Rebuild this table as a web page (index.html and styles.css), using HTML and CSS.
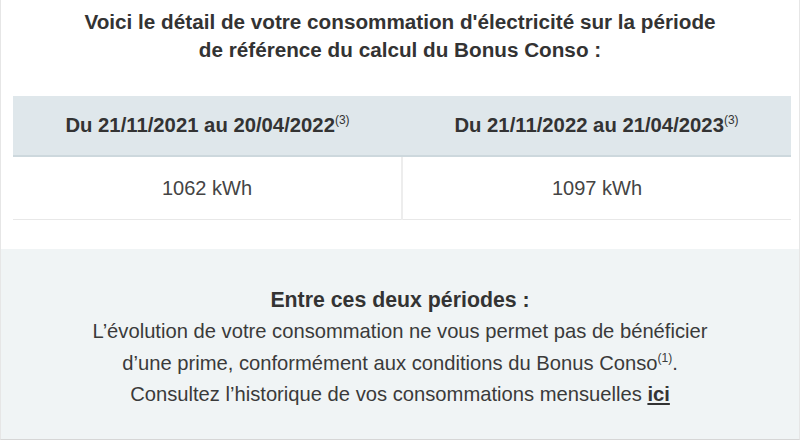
FILE: index.html
```html
<!DOCTYPE html>
<html lang="fr">
<head>
<meta charset="utf-8">
<link rel="stylesheet" href="styles.css">
</head>
<body>
<div class="card">
  <h1 class="title">Voici le détail de votre consommation d'électricité sur la période<br>de référence du calcul du Bonus Conso :</h1>
  <table class="conso">
    <thead>
      <tr>
        <th>Du 21/11/2021 au 20/04/2022<sup>(3)</sup></th>
        <th>Du 21/11/2022 au 21/04/2023<sup>(3)</sup></th>
      </tr>
    </thead>
    <tbody>
      <tr>
        <td>1062 kWh</td>
        <td>1097 kWh</td>
      </tr>
    </tbody>
  </table>
  <div class="result">
    <p class="result-title">Entre ces deux périodes :</p>
    <p class="result-text">L’évolution de votre consommation ne vous permet pas de bénéficier<br>d’une prime, conformément aux conditions du Bonus Conso<sup>(1)</sup>.<br>Consultez l’historique de vos consommations mensuelles <a href="#">ici</a></p>
  </div>
</div>
</body>
</html>
```

FILE: styles.css
```css
html, body {
  margin: 0;
  padding: 0;
  background: #ffffff;
}

body {
  font-family: "Liberation Sans", Arial, sans-serif;
  color: #3a3a3a;
}

.card {
  box-sizing: border-box;
  width: 800px;
  height: 440px;
  border-left: 1px solid #e6e6e6;
  border-right: 1px solid #e6e6e6;
  border-bottom: 1px solid #d6d6d6;
  display: flex;
  flex-direction: column;
  overflow: hidden;
}

.title {
  margin: 0;
  padding: 8px 0 0;
  font-size: 20.7px;
  line-height: 28px;
  font-weight: bold;
  text-align: center;
  color: #333333;
  height: 96px;
  box-sizing: border-box;
  flex: none;
}

.conso {
  margin: 0 8px 0 12px;
  border-collapse: collapse;
  table-layout: fixed;
  width: calc(100% - 20px);
  flex: none;
}

.conso th {
  background: #dfe7eb;
  height: 59px;
  padding: 0;
  font-size: 20.3px;
  font-weight: bold;
  color: #333333;
  border-bottom: 2px solid #cdd8dd;
  text-align: center;
}

.conso td {
  height: 62px;
  padding: 0;
  font-size: 20px;
  color: #444444;
  text-align: center;
  border-bottom: 1px solid #e8e8e8;
}

.conso td + td {
  border-left: 2px solid #ededed;
}

sup {
  font-size: 12px;
  font-weight: normal;
  vertical-align: 8px;
  line-height: 0;
}

.result {
  margin-top: 29px;
  flex: 1;
  background: #f0f4f5;
  text-align: center;
  padding-top: 36px;
  font-size: 20.2px;
  line-height: 31.3px;
  color: #3a3a3a;
}

.result p {
  margin: 0;
}

.result-title {
  font-weight: bold;
  font-size: 21.3px;
  color: #333333;
}

.result a {
  color: #333333;
  font-weight: bold;
  text-decoration: underline;
}
```
